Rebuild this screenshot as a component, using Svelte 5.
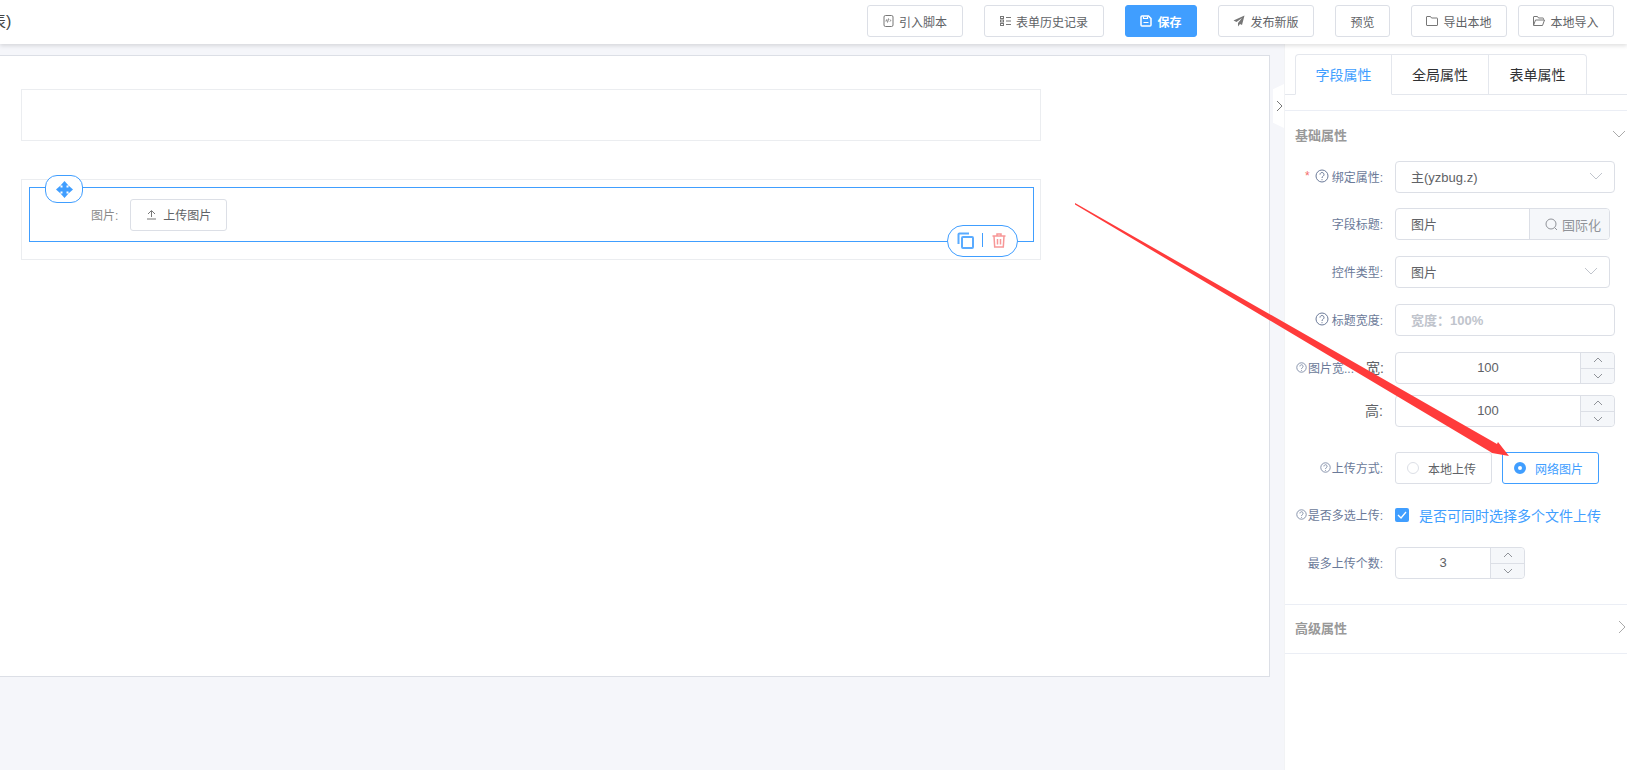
<script lang="ts">
  const toolbar = [
    {label: '引入脚本', width: 96, icon: 'script'},
    {label: '表单历史记录', width: 120, icon: 'list'},
    {label: '保存', width: 72, icon: 'save', primary: true},
    {label: '发布新版', width: 96, icon: 'send'},
    {label: '预览', width: 55, icon: ''},
    {label: '导出本地', width: 96, icon: 'folder'},
    {label: '本地导入', width: 96, icon: 'open', near: true}
  ];
  const tabs = ['字段属性', '全局属性', '表单属性'];
</script>

{#snippet chevronDown()}
  <svg class="chev" width="14" height="8" viewBox="0 0 14 8"><path d="M1 1l6 6 6-6" /></svg>
{/snippet}

{#snippet help(size)}
  <svg class="help" width={size} height={size} viewBox="0 0 14 14">
    <circle cx="7" cy="7" r="6" />
    <path d="M5 5.6a2 2 0 1 1 3.2 1.5c-.8.6-1.2.9-1.2 1.9" />
    <path d="M7 10.2v1" />
  </svg>
{/snippet}

{#snippet stepper()}
  <div class="steps">
    <span><svg width="10" height="6" viewBox="0 0 10 6"><path d="M1 5l4-4 4 4" /></svg></span>
    <span><svg width="10" height="6" viewBox="0 0 10 6"><path d="M1 1l4 4 4-4" /></svg></span>
  </div>
{/snippet}

<div class="page">
  <header class="topbar">
    <div class="title">表)</div>
    <div class="actions">
      {#each toolbar as btn}
        <button class="btn" class:primary={btn.primary} class:near={btn.near} style="width: {btn.width}px">
          {#if btn.icon === 'script'}
            <svg width="11" height="12" viewBox="0 0 11 12"><rect x="1" y=".5" width="9" height="11" rx="1.5" /><path d="M3.5 4.5L3 6.5M5.5 3.5l-1 4M7 4.5l.7 1-.7 1" /></svg>
          {:else if btn.icon === 'list'}
            <svg width="11" height="10" viewBox="0 0 11 10"><rect x=".5" y=".5" width="3" height="2" /><rect x=".5" y="4" width="3" height="2" /><rect x=".5" y="7.5" width="3" height="2" /><path d="M6 1.5h5M6 5h5M6 8.5h5" /></svg>
          {:else if btn.icon === 'save'}
            <svg width="12" height="12" viewBox="0 0 12 12"><path d="M1 2a1 1 0 0 1 1-1h6.5L11 3.500V10a1 1 0 0 1-1 1H2a1 1 0 0 1-1-1z" stroke-width="1.5" /><path d="M3.5 1.5v2h4v-2M3.5 7.5h5" stroke-width="1.2" /></svg>
          {:else if btn.icon === 'send'}
            <svg width="12" height="12" viewBox="0 0 12 12"><path class="fill" d="M11.5.5L.5 5.500l3 1.500L9 3 5 8v3.500l2-2.500 2 1z" /></svg>
          {:else if btn.icon === 'folder'}
            <svg width="12" height="10" viewBox="0 0 12 10"><path d="M.5 1a.5.5 0 0 1 .5-.5h3.500l1 1.500H11a.5.5 0 0 1 .5.5V9a.5.5 0 0 1-.5.5H1A.5.5 0 0 1 .5 9z" /></svg>
          {:else if btn.icon === 'open'}
            <svg width="12" height="10" viewBox="0 0 12 10"><path d="M.5 1a.5.5 0 0 1 .5-.5h3.500l1 1.500H10a.5.5 0 0 1 .5.5v1M.5 9V1M.5 9.500h9l2-5.500H2.500L.5 9.500z" /></svg>
          {/if}
          <span>{btn.label}</span>
        </button>
      {/each}
    </div>
  </header>

  <div class="body">
    <main class="workspace">
      <div class="canvas">
        <div class="slot empty"></div>
        <div class="slot filled">
          <div class="selected">
            <div class="move">
              <svg width="17" height="17" viewBox="0 0 17 17">
                <path class="fill" d="M8.5 0L12.500 4.500H10.500V6.500H12.500V4.500L17 8.500L12.500 12.500V10.500H10.500V12.500H12.500L8.500 17L4.500 12.500H6.500V10.500H4.500V12.500L0 8.500L4.500 4.500V6.500H6.500V4.500H4.500z" />
              </svg>
            </div>
            <span class="field-label">图片:</span>
            <button class="btn upload">
              <svg width="11" height="11" viewBox="0 0 11 11"><path d="M2 5l3.500-3.500L9 5M5.500 2v6M1 10h9" /></svg>
              <span>上传图片</span>
            </button>
            <div class="tools">
              <svg class="copy" width="17" height="17" viewBox="0 0 17 17">
                <path d="M12 1.500H2.500a1 1 0 0 0-1 1V12" />
                <rect x="5" y="5" width="11" height="11" rx="1" />
              </svg>
              <i></i>
              <svg class="trash" width="14" height="15" viewBox="0 0 14 15">
                <path d="M.5 3h13M5 3V1h4v2M2 3l.7 11h8.600L12 3M5.500 6v5.500M8.500 6v5.500" />
              </svg>
            </div>
          </div>
        </div>
      </div>
    </main>

    <aside class="panel">
      <div class="collapse">
        <svg width="7" height="12" viewBox="0 0 7 12"><path d="M1 1l5 5-5 5" /></svg>
      </div>
      <div class="tabs">
        {#each tabs as tab, i}
          <div class="tab" class:active={i === 0}>{tab}</div>
        {/each}
      </div>

      <div class="section-head first">
        <span>基础属性</span>
        {@render chevronDown()}
      </div>

      <div class="form">
        <div class="row gap15">
          <label class="lbl"><em>*</em>{@render help(14)}绑定属性:</label>
          <div class="input select wide"><span>主(yzbug.z)</span>{@render chevronDown()}</div>
        </div>
        <div class="row">
          <label class="lbl">字段标题:</label>
          <div class="input group">
            <span class="val">图片</span>
            <span class="addon">
              <svg width="13" height="13" viewBox="0 0 13 13"><circle cx="6" cy="6" r="5" /><path d="M9.500 9.500L12 12" /></svg>
              国际化
            </span>
          </div>
        </div>
        <div class="row">
          <label class="lbl">控件类型:</label>
          <div class="input select"><span>图片</span>{@render chevronDown()}</div>
        </div>
        <div class="row">
          <label class="lbl">{@render help(14)}标题宽度:</label>
          <div class="input wide placeholder">宽度：100%</div>
        </div>
        <div class="row tight">
          <label class="lbl tiny size-label">{@render help(11)}图片宽...<b>宽:</b></label>
          <div class="input number wide"><span class="num">100</span>{@render stepper()}</div>
        </div>
        <div class="row loose">
          <label class="lbl"><b>高:</b></label>
          <div class="input number wide"><span class="num">100</span>{@render stepper()}</div>
        </div>
        <div class="row gap15">
          <label class="lbl tiny">{@render help(11)}上传方式:</label>
          <div class="radios">
            <div class="radio"><span class="dot"></span>本地上传</div>
            <div class="radio on"><span class="dot"></span>网络图片</div>
          </div>
        </div>
        <div class="row">
          <label class="lbl tiny">{@render help(11)}是否多选上传:</label>
          <div class="check">
            <span class="box"><svg width="10" height="8" viewBox="0 0 10 8"><path d="M1 4l3 3 5-6" /></svg></span>
            是否可同时选择多个文件上传
          </div>
        </div>
        <div class="row">
          <label class="lbl">最多上传个数:</label>
          <div class="input number short"><span class="num">3</span>{@render stepper()}</div>
        </div>
      </div>

      <div class="section-head last">
        <span>高级属性</span>
        <svg class="chev" width="8" height="14" viewBox="0 0 8 14"><path d="M1 1l6 6-6 6" /></svg>
      </div>
    </aside>
  </div>

  <!-- annotation drawn on top of the screenshot -->
  <svg class="arrow" width="1627" height="770" viewBox="0 0 1627 770">
    <polygon points="1075,203 1497,444 1498,442 1509,456 1492,453 1489,451 1075,204.500" />
  </svg>
</div>

<style>
  :global(body) {
    margin: 0;
    background: #fff;
    font-family: "Liberation Sans", "Noto Sans CJK SC", sans-serif;
    overflow: hidden;
  }

  .page {
    position: relative;
    width: 1627px;
    height: 770px;
    overflow: hidden;
    display: flex;
    flex-direction: column;
  }

  svg path,
  svg rect,
  svg circle,
  svg polygon {
    fill: none;
    stroke: currentColor;
  }

  svg .fill {
    fill: currentColor;
    stroke: none;
  }

  .topbar {
    height: 44px;
    flex: none;
    box-sizing: border-box;
    display: flex;
    align-items: center;
    justify-content: space-between;
    padding: 0 13px 2px 0;
    background: #fff;
    box-shadow: 0 2px 4px rgba(0, 0, 0, 0.12);
    position: relative;
    z-index: 2;
  }

  .title {
    margin: 0 0 2px -10px;
    font-size: 16px;
    color: #444;
  }

  .actions {
    display: flex;
    gap: 21px;
  }

  .btn {
    height: 32px;
    padding: 0;
    display: inline-flex;
    align-items: center;
    justify-content: center;
    gap: 5px;
    border: 1px solid #dcdfe6;
    border-radius: 3px;
    background: #fff;
    color: #606266;
    font: 12px "Liberation Sans", "Noto Sans CJK SC", sans-serif;
  }

  .btn.near {
    margin-left: -10px;
  }

  .btn svg {
    color: #777;
    flex: none;
  }

  .btn.primary {
    background: #409eff;
    border-color: #409eff;
    color: #fff;
    font-weight: 700;
  }

  .btn.primary svg {
    color: #fff;
  }

  .body {
    flex: 1;
    display: flex;
    min-height: 0;
  }

  .workspace {
    flex: none;
    width: 1285px;
    padding: 11px 15px 0 0;
    box-sizing: border-box;
    background: #f5f6fa;
  }

  .canvas {
    height: 622px;
    box-sizing: border-box;
    padding: 33px 228px 0 21px;
    background: #fff;
    border: 1px solid #dcdfe6;
    border-left: 0;
  }

  .slot {
    border: 1px solid #ebedf0;
    box-sizing: border-box;
  }

  .slot.empty {
    height: 52px;
    margin-bottom: 38px;
  }

  .slot.filled {
    height: 81px;
    padding: 7px 6px 7px 7px;
  }

  .selected {
    position: relative;
    height: 55px;
    box-sizing: border-box;
    border: 1px solid #409eff;
    display: flex;
    align-items: center;
    padding: 0 0 0 61px;
    gap: 12px;
  }

  .field-label {
    font-size: 12px;
    color: #8a8a8a;
  }

  .upload {
    width: 97px;
  }

  .upload span {
    margin-left: 1px;
  }

  .move {
    position: absolute;
    left: 15px;
    top: -13px;
    width: 38px;
    height: 28px;
    box-sizing: border-box;
    border: 1px solid #409eff;
    border-radius: 12px;
    background: #fff;
    display: flex;
    align-items: center;
    justify-content: center;
    color: #409eff;
  }

  .tools {
    position: absolute;
    right: 15px;
    bottom: -16px;
    width: 71px;
    height: 32px;
    box-sizing: border-box;
    border: 1px solid #409eff;
    border-radius: 16px;
    background: #fff;
    display: flex;
    align-items: center;
    justify-content: center;
    gap: 8px;
    padding: 0 2px 2px 0;
  }

  .tools i {
    width: 1px;
    height: 14px;
    background: #409eff;
  }

  .copy {
    color: #5aabff;
  }

  .copy path,
  .copy rect {
    stroke-width: 2;
  }

  .trash {
    color: #f56c6c;
    opacity: 0.7;
    margin-left: 1px;
  }

  .trash path {
    stroke-width: 1.5;
  }

  .panel {
    position: relative;
    flex: 1;
    background: #fff;
    border-left: 1px solid #f2f3f5;
    margin-left: -1px;
  }

  .collapse {
    position: absolute;
    left: -12px;
    top: 40px;
    width: 11px;
    height: 44px;
    box-sizing: border-box;
    padding-left: 2px;
    background: #fff;
    clip-path: polygon(0 12%, 100% 0, 100% 100%, 0 88%);
    display: flex;
    align-items: center;
    justify-content: center;
    color: #777;
  }

  .tabs {
    display: flex;
    margin-top: 10px;
    padding-left: 10px;
    height: 41px;
    box-sizing: border-box;
    border-bottom: 1px solid #e4e7ed;
  }

  .tab {
    width: 97px;
    height: 41px;
    box-sizing: border-box;
    padding-bottom: 2px;
    display: flex;
    align-items: center;
    justify-content: center;
    font-size: 14px;
    color: #303133;
    border: 1px solid #e4e7ed;
    border-left: 0;
  }

  .tab:first-child {
    border-left: 1px solid #e4e7ed;
    border-top-left-radius: 4px;
    width: 97px;
  }

  .tab:last-child {
    border-top-right-radius: 4px;
    width: 98px;
  }

  .tab.active {
    color: #409eff;
    border-bottom-color: #fff;
  }

  .section-head {
    display: flex;
    align-items: center;
    justify-content: space-between;
    box-sizing: border-box;
    padding: 0 0 2px 10px;
    font-size: 13px;
    font-weight: 700;
    color: #999;
    border-top: 1px solid #ebeef5;
  }

  .section-head.first {
    margin-top: 15px;
    height: 49px;
  }

  .section-head.last {
    height: 50px;
    margin-top: 25px;
    padding-bottom: 4px;
    border-bottom: 1px solid #ebeef5;
  }

  .section-head .chev {
    color: #aaa;
    margin-right: 1px;
  }

  .form {
    padding-top: 2px;
  }

  .row {
    display: flex;
    align-items: center;
    height: 32px;
    margin-bottom: 16px;
  }

  .row.gap15 {
    margin-bottom: 15px;
  }

  .row.tight {
    margin-bottom: 11px;
  }

  .row.loose {
    margin-bottom: 25px;
  }

  .row:last-child {
    margin-bottom: 0;
  }

  .lbl {
    width: 110px;
    flex: none;
    box-sizing: border-box;
    padding: 0 12px 2px 0;
    display: flex;
    align-items: center;
    justify-content: flex-end;
    gap: 3px;
    font-size: 12px;
    color: #6b7a99;
    white-space: nowrap;
  }

  .lbl em {
    color: #f56c6c;
    font-style: normal;
    margin-right: 2px;
  }

  .lbl b {
    font-weight: 400;
    font-size: 14px;
    color: #606266;
  }

  .lbl.tiny {
    gap: 1px;
  }

  .size-label {
    padding-left: 11px;
    padding-right: 11px;
  }

  .size-label b {
    margin-left: auto;
  }

  .help {
    flex: none;
    color: #6b7a99;
  }

  .input {
    box-sizing: border-box;
    width: 215px;
    height: 32px;
    border: 1px solid #dcdfe6;
    border-radius: 4px;
    background: #fff;
    display: flex;
    align-items: center;
    padding-left: 15px;
    font-size: 13px;
    color: #606266;
    position: relative;
  }

  .input.wide {
    width: 220px;
  }

  .select {
    justify-content: space-between;
    padding-right: 11px;
    padding-bottom: 2px;
  }

  .select .chev {
    color: #c0c4cc;
  }

  svg.chev path {
    stroke-width: 1;
  }

  .placeholder {
    color: #c0c4cc;
    font-weight: 700;
    padding-bottom: 2px;
  }

  .group {
    padding: 0;
    overflow: hidden;
  }

  .group .val {
    width: 133px;
    padding: 0 0 2px 15px;
    box-sizing: border-box;
  }

  .addon {
    flex: 1;
    height: 100%;
    display: flex;
    align-items: center;
    gap: 4px;
    padding-left: 15px;
    background: #f5f7fa;
    border-left: 1px solid #dcdfe6;
    color: #909399;
    font-size: 13px;
    white-space: nowrap;
  }

  .number {
    padding: 0;
  }

  .number .num {
    flex: 1;
    text-align: center;
    font-size: 13px;
    padding-bottom: 2px;
  }

  .input.short {
    width: 130px;
  }

  .steps {
    width: 33px;
    height: 100%;
    flex: none;
    display: flex;
    flex-direction: column;
    border-left: 1px solid #dcdfe6;
    background: #f5f7fa;
    border-radius: 0 4px 4px 0;
  }

  .steps span {
    flex: 1;
    display: flex;
    align-items: center;
    justify-content: center;
    color: #909399;
  }

  .steps span:first-child {
    border-bottom: 1px solid #dcdfe6;
  }

  .radios {
    display: flex;
    gap: 10px;
  }

  .radio {
    width: 97px;
    height: 32px;
    box-sizing: border-box;
    border: 1px solid #dcdfe6;
    border-radius: 3px;
    display: flex;
    align-items: center;
    gap: 9px;
    padding-left: 11px;
    font-size: 12px;
    color: #606266;
  }

  .dot {
    width: 12px;
    height: 12px;
    box-sizing: border-box;
    border: 1px solid #dcdfe6;
    border-radius: 50%;
    flex: none;
  }

  .radio.on {
    border-color: #409eff;
    color: #409eff;
  }

  .radio.on .dot {
    border: 4px solid #409eff;
    background: #fff;
  }

  .check {
    display: flex;
    align-items: center;
    gap: 10px;
    font-size: 14px;
    color: #409eff;
    white-space: nowrap;
  }

  .box {
    width: 14px;
    height: 14px;
    border-radius: 2px;
    background: #409eff;
    color: #fff;
    display: flex;
    align-items: center;
    justify-content: center;
  }

  .box path {
    stroke-width: 1.3;
  }

  .arrow {
    position: absolute;
    left: 0;
    top: 0;
    z-index: 5;
    pointer-events: none;
  }

  .arrow polygon {
    fill: #ff3b3b;
    stroke: none;
  }
</style>
